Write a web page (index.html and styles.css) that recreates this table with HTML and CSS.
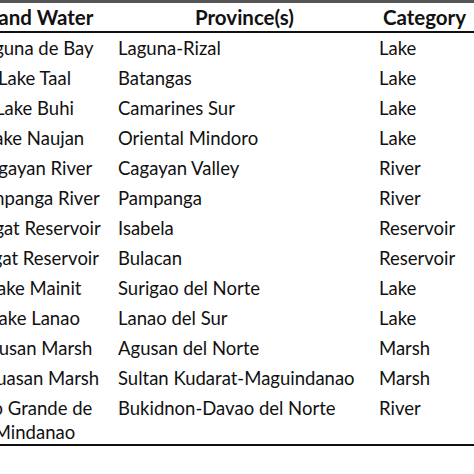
FILE: index.html
```html
<!DOCTYPE html>
<html>
<head>
<meta charset="utf-8">
<link rel="stylesheet" href="styles.css">
</head>
<body>
<div class="frame">
<table class="water-table">
  <colgroup>
    <col class="w-name">
    <col class="w-prov">
    <col class="w-cat">
  </colgroup>
  <thead>
    <tr>
      <th>Inland Water</th>
      <th>Province(s)</th>
      <th>Category</th>
    </tr>
  </thead>
  <tbody>
    <tr><td class="c-name">Laguna de Bay</td><td>Laguna-Rizal</td><td>Lake</td></tr>
    <tr><td class="c-name">Lake Taal</td><td>Batangas</td><td>Lake</td></tr>
    <tr><td class="c-name">Lake Buhi</td><td>Camarines Sur</td><td>Lake</td></tr>
    <tr><td class="c-name">Lake Naujan</td><td>Oriental Mindoro</td><td>Lake</td></tr>
    <tr><td class="c-name">Cagayan River</td><td>Cagayan Valley</td><td>River</td></tr>
    <tr><td class="c-name">Pampanga River</td><td>Pampanga</td><td>River</td></tr>
    <tr><td class="c-name">Magat Reservoir</td><td>Isabela</td><td>Reservoir</td></tr>
    <tr><td class="c-name">Angat Reservoir</td><td>Bulacan</td><td>Reservoir</td></tr>
    <tr><td class="c-name">Lake Mainit</td><td>Surigao del Norte</td><td>Lake</td></tr>
    <tr><td class="c-name">Lake Lanao</td><td>Lanao del Sur</td><td>Lake</td></tr>
    <tr><td class="c-name">Agusan Marsh</td><td>Agusan del Norte</td><td>Marsh</td></tr>
    <tr><td class="c-name">Buluasan Marsh</td><td>Sultan Kudarat-Maguindanao</td><td>Marsh</td></tr>
    <tr class="last"><td class="c-name">Rio Grande de Mindanao</td><td>Bukidnon-Davao del Norte</td><td>River</td></tr>
  </tbody>
</table>
</div>
</body>
</html>
```
FILE: styles.css
```css
html, body {
  margin: 0;
  padding: 0;
  background: #ffffff;
  overflow: hidden;
}
.frame {
  width: 474px;
  height: 474px;
  overflow: hidden;
}
.water-table {
  margin-left: -45px;
  width: 519px;
  border-collapse: collapse;
  table-layout: fixed;
  font-family: "Lato", "Liberation Sans", sans-serif;
  font-size: 18.5px;
  color: #111111;
  border-top: 3px solid #555555;
  border-bottom: 2px solid #111111;
}
.w-name { width: 159px; }
.w-prov { width: 261px; }
.w-cat { width: 99px; }
.water-table th {
  font-size: 20.5px;
  font-weight: 700;
  text-align: center;
  height: 28px;
  padding: 0;
  line-height: 24px;
  border-bottom: 2px solid #111111;
  white-space: nowrap;
}
.water-table td {
  padding: 3px 4px;
  line-height: 24px;
  height: 24px;
  vertical-align: top;
  text-align: left;
}
.water-table td.c-name {
  text-align: center;
}
.water-table .last td {
  padding-bottom: 0;
}
```
